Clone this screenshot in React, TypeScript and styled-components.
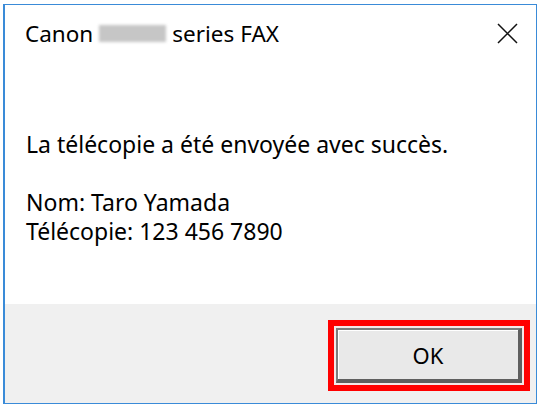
import React from "react";
import styled, { createGlobalStyle } from "styled-components";

const Global = createGlobalStyle`
  html, body { margin: 0; padding: 0; background: #ffffff; }
  body { width: 540px; height: 406px; overflow: hidden; }
  * { box-sizing: border-box; }
`;

const Page = styled.div`
  width: 540px;
  height: 406px;
  padding: 4px 3px 2px 3px;
  background: #ffffff;
  font-family: "Noto Sans", "Open Sans", "Liberation Sans", sans-serif;
  color: #000000;
`;

const Window = styled.div`
  width: 100%;
  height: 100%;
  display: flex;
  flex-direction: column;
  border: 1px solid #3a8bd8;
  border-left-width: 2px;
  background: #ffffff;
`;

const TitleBar = styled.div`
  height: 57px;
  display: flex;
  align-items: center;
  padding: 0 18px 0 20px;
  font-size: 22.5px;
`;

const TitleText = styled.div`
  flex: 1;
  display: flex;
  align-items: center;
  gap: 6px;
  white-space: nowrap;
`;

const Redacted = styled.span`
  display: inline-block;
  width: 67px;
  height: 17px;
  background: #c6c6c6;
  filter: blur(1.5px);
`;

const CloseButton = styled.div`
  width: 22px;
  height: 22px;
  display: flex;
  align-items: center;
  justify-content: center;
`;

const Content = styled.div`
  flex: 1;
  padding: 68px 20px 0 21px;
  font-size: 23px;
  line-height: 29px;
  white-space: pre-line;
`;

const Footer = styled.div`
  height: 99px;
  background: #f0f0f0;
  display: flex;
  justify-content: flex-end;
  align-items: flex-start;
  padding: 16px 6px 0 0;
`;

const Highlight = styled.div`
  border: 6px solid #ff0000;
  padding: 2px;
  background: #f4e8e8;
`;

const OkButton = styled.button`
  width: 186px;
  height: 55px;
  display: flex;
  align-items: center;
  justify-content: center;
  font-family: inherit;
  font-size: 22px;
  color: #000;
  background: #e9e9e9;
  border-style: solid;
  border-color: #7c7c7c #5f5f5f #5f5f5f #7c7c7c;
  border-width: 2px 4px 4px 2px;
  box-shadow: inset 1px 1px 0 #ffffff;
  padding: 0;
`;

export default function App() {
  return (
    <>
      <Global />
      <Page>
        <Window>
          <TitleBar>
            <TitleText>
              <span>Canon</span>
              <Redacted />
              <span>series FAX</span>
            </TitleText>
            <CloseButton>
              <svg width="21" height="21" viewBox="0 0 21 21">
                <path d="M1 1 L20 20 M20 1 L1 20" stroke="#111" strokeWidth="1.5" fill="none" />
              </svg>
            </CloseButton>
          </TitleBar>
          <Content>
            {"La télécopie a été envoyée avec succès.\n\nNom: Taro Yamada\nTélécopie: 123 456 7890"}
          </Content>
          <Footer>
            <Highlight>
              <OkButton>OK</OkButton>
            </Highlight>
          </Footer>
        </Window>
      </Page>
    </>
  );
}
